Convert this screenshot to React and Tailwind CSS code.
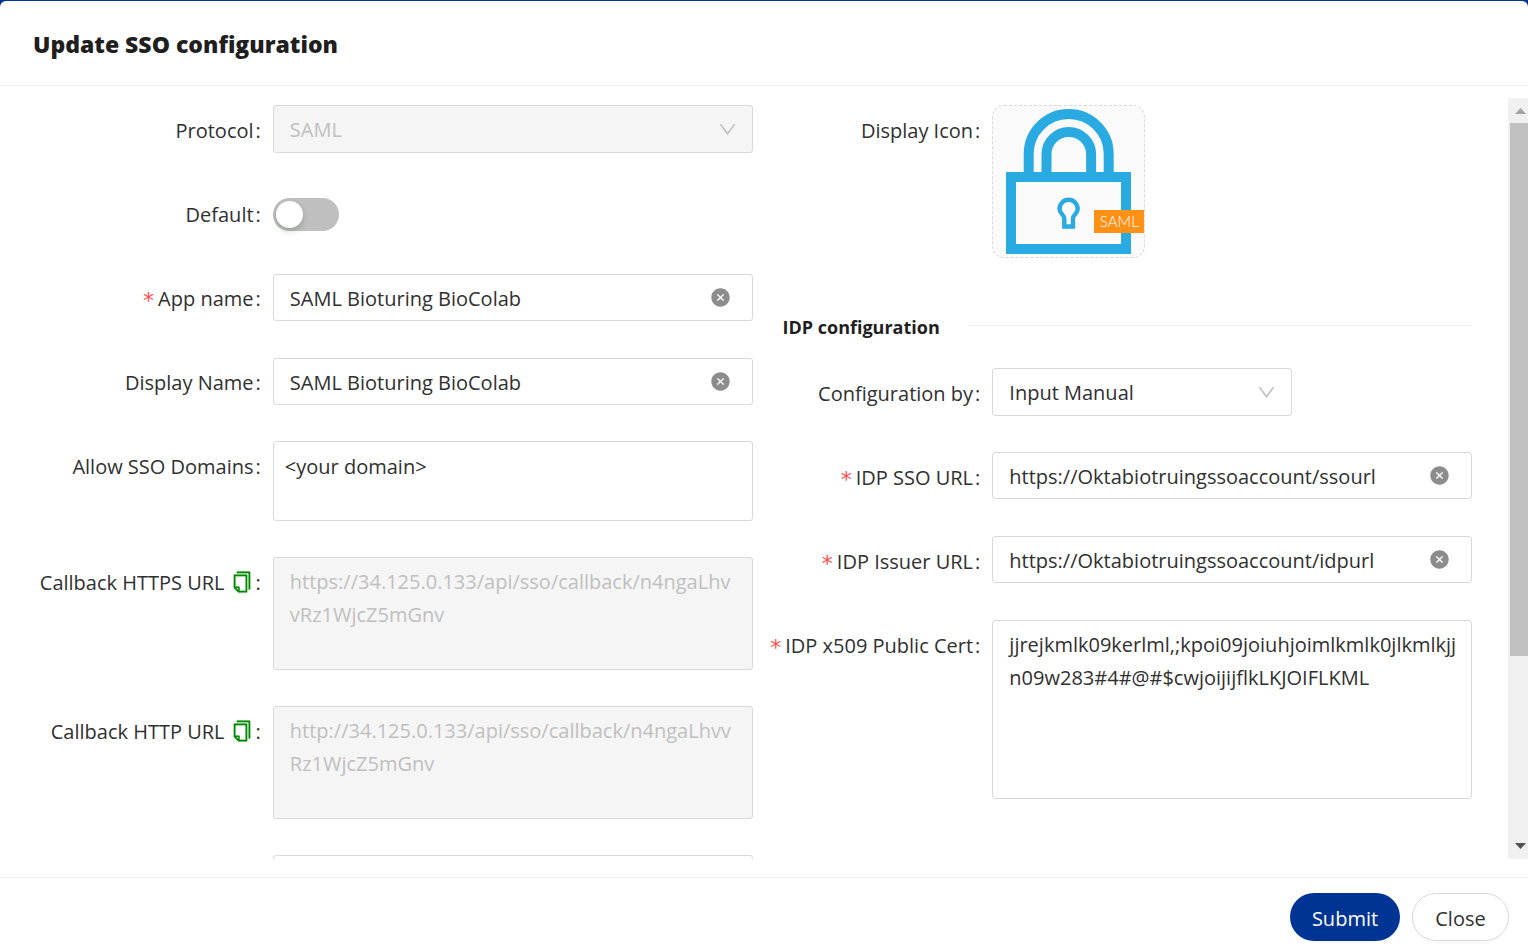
import { useState } from "react";
import { AiFillCloseCircle, AiOutlineCopy, AiOutlineDown } from "react-icons/ai";

const BOX = "w-full rounded-[3px] border border-[#d9d9d9] bg-white text-[#303030] outline-none focus:border-[#003494]";

function Field({ id, label, required, extra, children, className = "" }) {
  return (
    <div className={`grid grid-cols-3 ${className}`}>
      <div className="flex h-[50px] items-center justify-end whitespace-nowrap pr-3">
        {required && (
          <span
            aria-hidden="true"
            className="mr-1 pt-1.5 font-['DejaVu_Sans',sans-serif] text-[22px] leading-none text-[#ff4d4f]"
          >
            *
          </span>
        )}
        <label htmlFor={id}>{label}</label>
        {extra}
        <span className="ml-0.5">:</span>
      </div>
      <div className="col-span-2">{children}</div>
    </div>
  );
}

function ClearableInput({ id, initial, className = "" }) {
  const [value, setValue] = useState(initial);
  return (
    <div className={`relative ${className}`}>
      <input
        id={id}
        type="text"
        value={value}
        onChange={(e) => setValue(e.target.value)}
        className={`${BOX} block h-[47px] pl-4 pr-14 pt-0.5`}
      />
      <button
        type="button"
        aria-label="Clear"
        onClick={() => setValue("")}
        className="absolute inset-y-0 right-[22px] flex items-center text-[#8c8c8c]"
      >
        <AiFillCloseCircle size={21} />
      </button>
    </div>
  );
}

function SelectBox({ id, option, disabled, className = "" }) {
  return (
    <div className={`relative ${className}`}>
      <select
        id={id}
        disabled={disabled}
        className={`${BOX} block h-12 appearance-none pl-4 pr-12 disabled:bg-[#f5f5f5] disabled:text-[#bfbfbf] disabled:opacity-100`}
      >
        <option>{option}</option>
      </select>
      <span className="pointer-events-none absolute inset-y-0 right-[15px] flex items-center text-[#bfbfbf]">
        <AiOutlineDown size={21} />
      </span>
    </div>
  );
}

function CopyButton({ label }) {
  return (
    <button type="button" aria-label={label} className="ml-[5px] text-[#008a00]">
      <AiOutlineCopy size={24} className="stroke-current stroke-[8]" />
    </button>
  );
}

function LockIcon() {
  return (
    <div className="relative size-[153px] overflow-hidden rounded-xl border border-dashed border-[#d9d9d9] bg-[#fafafa]">
      <svg viewBox="0 0 151 151" className="size-full" fill="none" stroke="#29aae1" strokeWidth="10" aria-hidden="true">
        <path d="M35.7 68V48a40 40 0 0 1 80 0v20" />
        <path d="M53.5 68V48.3a22.3 22.3 0 0 1 44.6 0V68" />
        <rect x="18" y="71" width="115" height="72" />
        <path
          d="M71.300 120.500v-8.200c0-3.400-4.800-4.800-4.800-9.400a9.100 9.100 0 0 1 18.200 0c0 4.600-4.700 6-4.700 9.400v8.200z"
          strokeWidth="4.400"
        />
      </svg>
      <span className="absolute right-0 top-[104px] flex h-[23px] w-[50px] items-center justify-center bg-[#ff9117] font-['Lato',sans-serif] text-[15px] font-light leading-none text-white">
        SAML
      </span>
    </div>
  );
}

function ScrollRail() {
  return (
    <div aria-hidden="true" className="flex w-5 shrink-0 flex-col bg-[#f0f0f0]">
      <svg viewBox="0 0 20 25" className="h-[25px] w-5 shrink-0">
        <path d="M7 16h11l-5.500-6z" fill="#a3a3a3" />
      </svg>
      <div className="ml-0.5 flex-[533] bg-[#c1c1c1]" />
      <div className="flex-[178]" />
      <svg viewBox="0 0 20 25" className="h-[25px] w-5 shrink-0">
        <path d="M7 9h11l-5.500 6z" fill="#505050" />
      </svg>
    </div>
  );
}

export default function App() {
  return (
    <div className="h-screen bg-[#003494] pt-px font-['Open_Sans',sans-serif] text-[20px] leading-[33px] text-[#303030]">
      <form
        onSubmit={(e) => e.preventDefault()}
        className="flex h-full flex-col overflow-hidden rounded-t-md bg-white"
      >
        <header className="flex h-[85px] shrink-0 items-center border-b border-[#f0f0f0] px-[33px]">
          <h1 className="pt-0.5 text-[23px] font-extrabold text-[#1f1f1f]">Update SSO configuration</h1>
        </header>

        <main className="mb-[18px] mt-3 flex min-h-0 flex-1">
          <div className="grid min-w-0 flex-1 grid-cols-2 items-start overflow-hidden pl-[33px] pr-9 pt-[7px]">
            <section className="flex flex-col gap-9">
              <Field id="protocol" label="Protocol" className="h-12">
                <SelectBox id="protocol" option="SAML" disabled />
              </Field>
              <Field id="default" label="Default" className="h-12">
                <div className="flex h-[50px] items-center">
                  <label className="flex h-[33px] w-[66px] cursor-pointer items-center rounded-full bg-[#bfbfbf] px-[3px] has-checked:justify-end has-checked:bg-[#003494]">
                    <input id="default" type="checkbox" role="switch" className="sr-only" />
                    <span className="size-[27px] rounded-full bg-white shadow-[0_3px_6px_rgba(0,35,11,0.2)]" />
                  </label>
                </div>
              </Field>
              <Field id="app-name" label="App name" required className="h-12">
                <ClearableInput id="app-name" initial="SAML Bioturing BioColab" className="mt-px" />
              </Field>
              <Field id="display-name" label="Display Name" className="h-12">
                <ClearableInput id="display-name" initial="SAML Bioturing BioColab" className="mt-px" />
              </Field>
              <Field id="domains" label="Allow SSO Domains" className="h-20">
                <textarea
                  id="domains"
                  defaultValue="<your domain>"
                  className={`${BOX} block h-20 resize-none px-[11px] py-2`}
                />
              </Field>
              <Field
                id="callback-https"
                label="Callback HTTPS URL"
                extra={<CopyButton label="Copy HTTPS URL" />}
                className="h-[113px]"
              >
                <textarea
                  id="callback-https"
                  disabled
                  defaultValue="https://34.125.0.133/api/sso/callback/n4ngaLhvvRz1WjcZ5mGnv"
                  className={`${BOX} block h-[113px] resize-none break-all py-[7px] pl-4 pr-3.5 disabled:bg-[#f5f5f5] disabled:text-[#bfbfbf]`}
                />
              </Field>
              <Field
                id="callback-http"
                label="Callback HTTP URL"
                extra={<CopyButton label="Copy HTTP URL" />}
                className="h-[113px]"
              >
                <textarea
                  id="callback-http"
                  disabled
                  defaultValue="http://34.125.0.133/api/sso/callback/n4ngaLhvvRz1WjcZ5mGnv"
                  className={`${BOX} block h-[113px] resize-none break-all py-[7px] pl-4 pr-3.5 disabled:bg-[#f5f5f5] disabled:text-[#bfbfbf]`}
                />
              </Field>
              <div className="grid h-12 grid-cols-3">
                <div className="col-span-2 col-start-2">
                  <input type="text" aria-label="Additional setting" className={`${BOX} block h-[47px] px-4`} />
                </div>
              </div>
            </section>

            <section>
              <Field label="Display Icon">
                <LockIcon />
              </Field>
              <div className="mb-6 mt-[53px] flex h-[33px] items-start pl-[30px]">
                <h2 className="whitespace-nowrap text-[18px] font-bold text-[#1f1f1f]">IDP configuration</h2>
                <span className="ml-7 mt-3.5 h-px flex-1 bg-[#f0f0f0]" />
              </div>
              <div className="flex flex-col gap-9">
                <Field id="config-by" label="Configuration by" className="h-12">
                  <SelectBox id="config-by" option="Input Manual" className="w-[300px]" />
                </Field>
                <Field id="sso-url" label="IDP SSO URL" required className="h-12">
                  <ClearableInput id="sso-url" initial="https://Oktabiotruingssoaccount/ssourl" />
                </Field>
                <Field id="issuer-url" label="IDP Issuer URL" required className="h-12">
                  <ClearableInput id="issuer-url" initial="https://Oktabiotruingssoaccount/idpurl" />
                </Field>
                <Field id="cert" label="IDP x509 Public Cert" required>
                  <textarea
                    id="cert"
                    defaultValue="jjrejkmlk09kerlml,;kpoi09joiuhjoimlkmlk0jlkmlkjjn09w283#4#@#$cwjoijijflkLKJOIFLKML"
                    className={`${BOX} block h-[179px] resize-none break-all py-[7px] pl-4 pr-3`}
                  />
                </Field>
              </div>
            </section>
          </div>
          <ScrollRail />
        </main>

        <footer className="flex h-[75px] shrink-0 items-start justify-end gap-3 border-t border-[#f0f0f0] pr-[19px] pt-[15px]">
          <button type="submit" className="h-12 w-[110px] rounded-full bg-[#003494] pt-0.5 text-white">
            Submit
          </button>
          <button
            type="button"
            className="h-12 w-[97px] rounded-full border border-[#d9d9d9] bg-white pt-0.5 shadow-[0_3px_0_rgba(0,0,0,0.016)]"
          >
            Close
          </button>
        </footer>
      </form>
    </div>
  );
}
